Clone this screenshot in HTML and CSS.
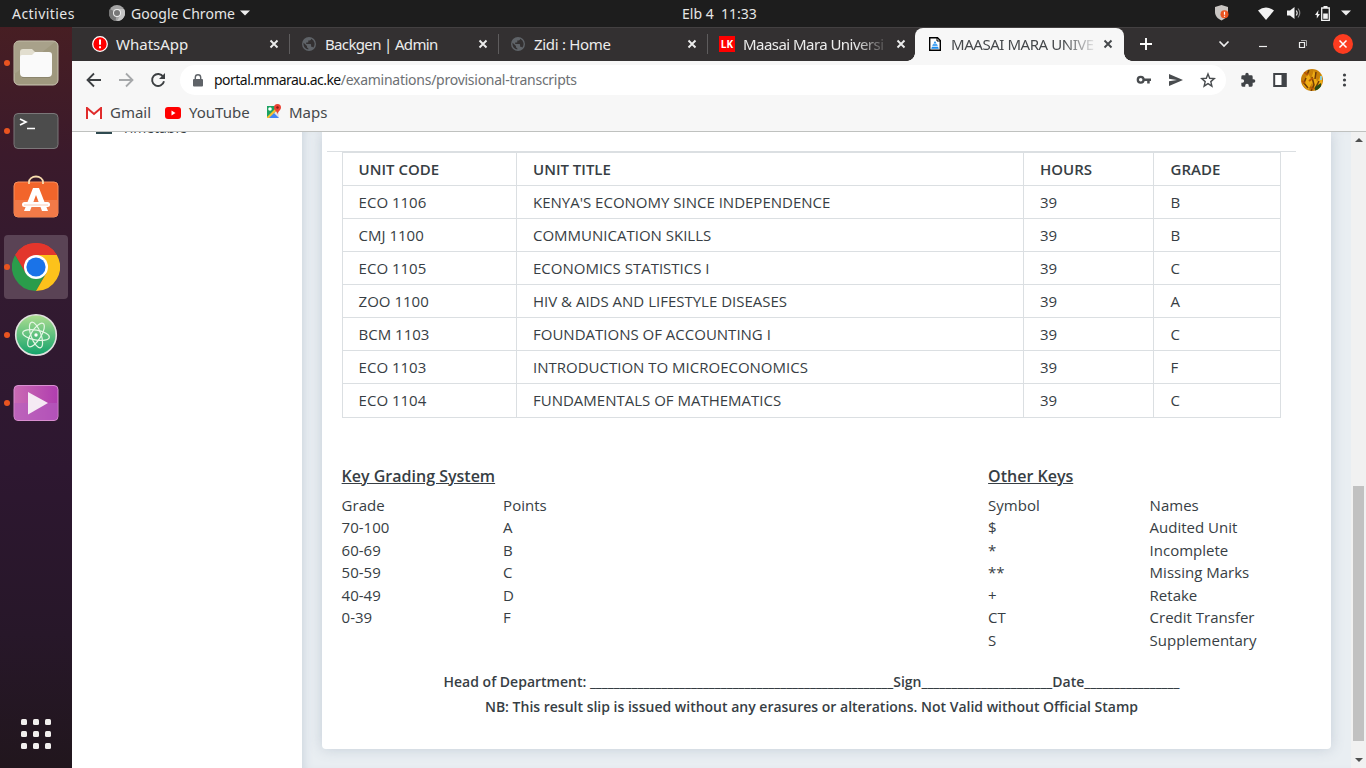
FILE: index.html
```html
<!DOCTYPE html>
<html lang="en">
<head>
<meta charset="utf-8">
<title>Provisional Transcripts</title>
<link rel="stylesheet" href="styles.css">
</head>
<body>
<svg class="defs" aria-hidden="true">
  <symbol id="x" viewBox="0 0 10 10"><path d="M1.500 1.500l7 7M8.500 1.500l-7 7" fill="none" stroke="currentColor" stroke-width="1.900"/></symbol>
  <symbol id="globe" viewBox="0 0 24 24"><path fill="#5f6368" d="M12 0a12 12 0 1 0 0 24 12 12 0 0 0 0-24zm-1.200 21.400A9.500 9.500 0 0 1 2.800 9.800l5.700 5.800v1.200c0 1.300 1 2.400 2.300 2.400zm8.300-3.100a2.400 2.400 0 0 0-2.300-1.600h-1.200v-3.600c0-.7-.5-1.200-1.200-1.200H7.200V9.600h2.400c.7 0 1.200-.5 1.200-1.200V6h2.400a2.400 2.400 0 0 0 2.400-2.400v-.5a9.500 9.500 0 0 1 3.500 15.200z"/></symbol>
</svg>
<div class="desktop">
  <header class="topbar">
    <span class="activities">Activities</span>
    <svg class="app-icon" viewBox="0 0 16 16"><circle cx="8" cy="8" r="8" fill="#a5a5a5"/><path d="M8 8L1 4a8 8 0 0 0 5.500 12z" fill="#777"/><path d="M8 4h7a8 8 0 0 1-7 12l3.500-6z" fill="#c4c4c4"/><circle cx="8" cy="8" r="4" fill="#eee"/><circle cx="8" cy="8" r="3" fill="#777"/></svg>
    <span class="app-name">Google Chrome</span>
    <svg class="caret" viewBox="0 0 10 6"><path d="M0 .5h10L5 5.500z" fill="#eee"/></svg>
    <span class="clock">Elb 4&nbsp; 11:33</span>
    <div class="tray">
      <svg class="shield" viewBox="0 0 14 16"><path d="M6.500 0L13 2v5c0 4-3 7-6.500 8.500C3 14 0 11 0 7V2z" fill="#c9c5c2"/><circle cx="9.500" cy="9.300" r="4" fill="#e95420"/><path d="M9.500 6.800v3M9.500 10.700v1" stroke="#fff" stroke-width="1.200"/></svg>
      <svg class="wifi" viewBox="0 0 16 13"><path d="M0 3.500Q8-2.500 16 3.500L8 13z" fill="#f2f2f2"/></svg>
      <svg class="sound" viewBox="0 0 15 14"><path d="M0 4.500h3L7.500 1v12L3 9.500H0z" fill="#f2f2f2"/><path d="M9.200 4.500q2 2.500 0 5" fill="none" stroke="#ddd" stroke-width="1.200"/><path d="M11 2.500q3.500 4.500 0 9" fill="none" stroke="#888" stroke-width="1.200"/></svg>
      <svg class="battery" viewBox="0 0 15 15"><path d="M3.500 4L0 9h1.800v3.500L5 8H3z" fill="#f2f2f2"/><path d="M6.700 2h7.600v12.300H6.700zM8.500 .6h4" fill="none" stroke="#f2f2f2" stroke-width="1.300"/><path d="M8.200 7.500h4.600v5.300H8.200z" fill="#f2f2f2"/></svg>
      <svg class="caret" viewBox="0 0 10 6"><path d="M0 .5h10L5 5.500z" fill="#eee"/></svg>
    </div>
  </header>

  <div class="workspace">
    <nav class="dock">
      <div class="launcher running"><svg viewBox="0 0 48 48"><rect x="2" y="2" width="44" height="44" rx="5" fill="#9f987e" stroke="#cbc6b3" stroke-width="1"/><path d="M2.500 35L43 3H7Q2.500 3 2.500 7z" fill="#a8a18a"/><path d="M8 13q0-3 3-3h9l3 3v7H8z" fill="#e2decf"/><path d="M8 18q0-2 2-2h10l3-3h14q3 0 3 3v18q0 4-4 4H12q-4 0-4-4z" fill="#fafafa"/><path d="M10 38.500h28" stroke="#8b856d"/></svg></div>
      <div class="launcher running"><svg viewBox="0 0 48 48"><rect x="2" y="6.500" width="44" height="35" rx="4" fill="#4c4c4c" stroke="#7b7779"/><path d="M8 12l6 3-6 3M15 21.500h8" fill="none" stroke="#fff" stroke-width="1.700"/></svg></div>
      <div class="launcher"><svg viewBox="0 0 48 48"><rect x="2" y="7" width="44" height="35" rx="4" fill="#f2652b" stroke="#f8905f"/><path d="M2.500 25h43v13q0 3.500-3.500 3.500H6q-3.500 0-3.500-3.500z" fill="#f27a48"/><path d="M17 9V7a7 5.500 0 0 1 14 0v2" fill="none" stroke="#f8dcae" stroke-width="1.800"/><path d="M21 13h6l9 23h-6l-6-16-6 16h-6z" fill="#fff"/><rect x="10" y="27" width="28" height="5" rx="2.500" fill="#fff"/><path d="M12 30h24" stroke="#f8c9b4"/></svg></div>
      <div class="launcher running focused"><svg viewBox="0 0 48 48"><path d="M24 24L3.200 12A24 24 0 0 1 44.800 12z" fill="#e3362c"/><path d="M24 24l-9 8L3.200 12a24 24 0 0 0 20.800 36l10-18z" fill="#2a9c4b"/><path d="M24 12h20.800A24 24 0 0 1 24 48l10.400-18z" fill="#fcc21b"/><path d="M3.200 12A24 24 0 0 1 44.800 12H24l-10.400 18z" fill="#e3362c"/><circle cx="24" cy="24" r="12" fill="#fff"/><circle cx="24" cy="24" r="9.600" fill="#1a73e8"/></svg></div>
      <div class="launcher running"><svg viewBox="0 0 48 48"><defs><linearGradient id="atom" x2="0" y2="1"><stop stop-color="#aede91"/><stop offset="1" stop-color="#12a36b"/></linearGradient></defs><circle cx="24" cy="24" r="20.300" fill="url(#atom)" stroke="#e1e1df" stroke-width="1.600"/><g fill="none" stroke="#e4f6e4" stroke-width="1.200"><ellipse cx="24" cy="24" rx="13.500" ry="5" transform="rotate(10 24 24)"/><ellipse cx="24" cy="24" rx="13.500" ry="5" transform="rotate(70 24 24)"/><ellipse cx="24" cy="24" rx="13.500" ry="5" transform="rotate(122 24 24)"/></g><circle cx="24" cy="24" r="1.700" fill="#fff"/></svg></div>
      <div class="launcher running"><svg viewBox="0 0 48 48"><defs><linearGradient id="video" x2="1" y2="0"><stop stop-color="#ca6bb3"/><stop offset="1" stop-color="#b03daf"/></linearGradient></defs><rect x="2" y="6.500" width="44" height="35" rx="4" fill="url(#video)" stroke="#d88fd0"/><path d="M2.500 24h43v14q0 3-3 3h-37q-3 0-3-3z" fill="#b45fc0" opacity=".6"/><path d="M16 13l20 11-20 11.500z" fill="#f5eaf4"/></svg></div>
      <div class="app-grid"><i></i><i></i><i></i><i></i><i></i><i></i><i></i><i></i><i></i></div>
    </nav>

    <main class="browser">
      <div class="tabs">
        <div class="tab"><svg class="favicon" viewBox="0 0 16 16"><circle cx="8" cy="8" r="7.300" fill="#f00" stroke="#fff" stroke-width="1.300"/><path d="M8 3.500v5.200M8 10.300v2" stroke="#fff" stroke-width="2"/></svg><span class="tab-title t-wa">WhatsApp</span><svg class="close"><use href="#x"/></svg></div>
        <div class="tab sep"><svg class="favicon globe"><use href="#globe"/></svg><span class="tab-title t-bg">Backgen | Admin</span><svg class="close"><use href="#x"/></svg></div>
        <div class="tab sep"><svg class="favicon globe"><use href="#globe"/></svg><span class="tab-title t-zi">Zidi : Home</span><svg class="close"><use href="#x"/></svg></div>
        <div class="tab sep"><span class="favicon lk">LK</span><span class="tab-title fade t-mm">Maasai Mara Universi</span><svg class="close"><use href="#x"/></svg></div>
        <div class="tab active"><svg class="favicon" viewBox="0 0 16 16"><path d="M2.700 1.700h7.800l2.800 2.800v9.800H2.700z" fill="#fff" stroke="#000" stroke-width="1.400"/><path d="M10 1.500v3.500h3.500" fill="none" stroke="#000"/><path d="M8 5l1.500 2.500h-3zM6 8.300h4l.8 1.500H5.200zM5 10.700h6l.8 2H4.200z" fill="#1a8cf0"/></svg><span class="tab-title fade t-act">MAASAI MARA UNIVE</span><svg class="close"><use href="#x"/></svg></div>
        <svg class="newtab" viewBox="0 0 12 12"><path d="M6 0v12M0 6h12" stroke="#fff" stroke-width="1.900"/></svg>
        <div class="winctl">
          <svg viewBox="0 0 20 20"><path d="M6.500 7.500L11 12l4.500-4.500" fill="none" stroke="#eee" stroke-width="1.700"/></svg>
          <svg viewBox="0 0 20 20"><path d="M6 12.500h8" stroke="#eee" stroke-width="1.200"/></svg>
          <svg viewBox="0 0 20 20"><path d="M6.500 8.500h5v5h-5z" fill="none" stroke="#eee" stroke-width="1.200"/><path d="M8 6.500h5.500V12" fill="none" stroke="#aaa"/></svg>
          <svg viewBox="0 0 20 20"><circle cx="10" cy="10" r="10" fill="#fc3c20"/><path d="M6.500 6.500l7 7m0-7l-7 7" stroke="#fff" stroke-width="1.500"/></svg>
        </div>
      </div>

      <div class="toolbar">
        <svg class="ico" viewBox="0 0 16 16"><path d="M15 8H2M8 1.500L1.500 8 8 14.500" fill="none" stroke="#3c3f42" stroke-width="1.800"/></svg>
        <svg class="ico" viewBox="0 0 16 16"><path d="M1 8h13M8 1.500L14.500 8 8 14.500" fill="none" stroke="#a6a8aa" stroke-width="1.800"/></svg>
        <svg class="ico" viewBox="0 0 16 16"><path d="M13.200 4.800A6 6 0 1 0 14 9.300" fill="none" stroke="#3c3f42" stroke-width="1.900"/><path d="M15 1v6H9z" fill="#3c3f42"/></svg>
        <div class="omnibox">
          <svg class="lock" viewBox="0 0 10 13"><path d="M1 5h8q1 0 1 1v5.500q0 1-1 1H1q-1 0-1-1V6q0-1 1-1z" fill="#5f6368"/><path d="M2.300 5.500V3.500a2.700 2.700 0 0 1 5.400 0v2" fill="none" stroke="#5f6368" stroke-width="1.400"/></svg>
          <span class="url"><b>portal.mmarau.ac.ke</b><span>/examinations/provisional-transcripts</span></span>
          <svg class="ico" viewBox="0 0 16 16"><circle cx="4.700" cy="7.700" r="2.900" fill="none" stroke="#494c4f" stroke-width="2.300"/><path d="M8 6.600h7v2.400h-1.300v2.400h-2.500V9H8z" fill="#494c4f"/></svg>
          <svg class="ico" viewBox="0 0 16 16"><path d="M1 2l14 6-14 6V9.200L9 8 1 6.800z" fill="#494c4f"/></svg>
          <svg class="ico" viewBox="0 0 16 16"><path d="M8 2l1.700 4.300 4.600.3-3.500 3 1.100 4.500L8 11.600l-3.900 2.500 1.100-4.500-3.500-3 4.600-.3z" fill="none" stroke="#494c4f" stroke-width="1.400"/></svg>
        </div>
        <svg class="ico ext" viewBox="0 0 24 24"><path d="M20.500 11H19V7a2 2 0 0 0-2-2h-4V3.500a2.500 2.500 0 0 0-5 0V5H4a2 2 0 0 0-2 2v3.800h1.500a2.700 2.700 0 0 1 0 5.400H2V20a2 2 0 0 0 2 2h3.800v-1.500a2.700 2.700 0 0 1 5.400 0V22H17a2 2 0 0 0 2-2v-4h1.500a2.500 2.500 0 0 0 0-5z" fill="#404347"/></svg>
        <svg class="ico" viewBox="0 0 16 16"><path d="M2.200 2h11.600v12H2.200z" fill="#fff" stroke="#404347" stroke-width="2"/><path d="M9.500 2H14v12H9.500z" fill="#404347"/></svg>
        <svg class="avatar" viewBox="0 0 22 22"><defs><clipPath id="round"><circle cx="11" cy="11" r="11"/></clipPath></defs><g clip-path="url(#round)"><path fill="#c98108" d="M0 0h22v22H0z"/><path d="M2 16L7 4l3 6 3-9 3 12 5-8v9l-5 8-5-8-4 7z" fill="#efac14"/><path d="M11 8l2 8-3 6M5 9l-2 5 4 5M15 3l-1 7M8 1L6 6M18 12l-4 8" stroke="#713c06" stroke-width="1.500" fill="none"/><path d="M14 18l6-4v6l-6 2z" fill="#294c16"/><path d="M3 3l4 3M8 12l4-3M1 12l3 2M12 20l-3-2" stroke="#ba5805" stroke-width="2"/><path d="M19 7h2v4h-2z" fill="#8fcbd0"/></g></svg>
        <svg class="ico" viewBox="0 0 16 16"><g fill="#404347"><circle cx="8.500" cy="3" r="1.600"/><circle cx="8.500" cy="8" r="1.600"/><circle cx="8.500" cy="13" r="1.600"/></g></svg>
      </div>

      <div class="bookmarks">
        <svg class="gmail" viewBox="0 0 16 12"><path d="M1 12V1l7 6 7-6v11" fill="#fff" stroke="#e02c2c" stroke-width="2"/></svg><span class="b-gm">Gmail</span>
        <svg class="yt" viewBox="0 0 16 12"><rect width="16" height="12" rx="3" fill="#f00"/><path d="M6.500 3.500v5l4-2.500z" fill="#fff"/></svg><span class="b-yt">YouTube</span>
        <svg class="maps" viewBox="0 0 16 16"><path d="M1 2h12v12H1z" fill="#1ca261"/><path d="M13 4v10H3z" fill="#e5e5e5"/><path d="M8 9l5 5H2z" fill="#4285f4"/><path d="M1 13L12 2h1v2L3 14H1z" fill="#fbc02d"/><circle cx="4" cy="5" r="1.800" fill="#fff"/><path d="M11.500 0a3.500 3.500 0 0 1 3.500 3.500c0 2.500-3 3.500-3.500 7-.5-3.500-3.500-4.500-3.500-7A3.500 3.500 0 0 1 11.500 0z" fill="#ea4335"/><circle cx="11.500" cy="3.500" r="1.200" fill="#8a1c15"/></svg><span class="b-mp">Maps</span>
      </div>

      <div class="page">
        <aside class="sidebar"><div class="side-item"><i></i><span>Timetable</span></div></aside>
        <section class="content">
          <article class="card">
            <hr>
            <div class="row">
              <table>
                <thead><tr><th class="c1">UNIT CODE</th><th class="c2">UNIT TITLE</th><th class="c3">HOURS</th><th class="c4">GRADE</th></tr></thead>
                <tbody>
                  <tr><td>ECO 1106</td><td>KENYA'S ECONOMY SINCE INDEPENDENCE</td><td>39</td><td>B</td></tr>
                  <tr><td>CMJ 1100</td><td>COMMUNICATION SKILLS</td><td>39</td><td>B</td></tr>
                  <tr><td>ECO 1105</td><td>ECONOMICS STATISTICS I</td><td>39</td><td>C</td></tr>
                  <tr><td>ZOO 1100</td><td>HIV &amp; AIDS AND LIFESTYLE DISEASES</td><td>39</td><td>A</td></tr>
                  <tr><td>BCM 1103</td><td>FOUNDATIONS OF ACCOUNTING I</td><td>39</td><td>C</td></tr>
                  <tr><td>ECO 1103</td><td>INTRODUCTION TO MICROECONOMICS</td><td>39</td><td>F</td></tr>
                  <tr><td>ECO 1104</td><td>FUNDAMENTALS OF MATHEMATICS</td><td>39</td><td>C</td></tr>
                </tbody>
              </table>
              <div class="keys">
                <div class="grading">
                  <h2>Key Grading System</h2>
                  <dl><dt>Grade</dt><dd>Points</dd><dt>70-100</dt><dd>A</dd><dt>60-69</dt><dd>B</dd><dt>50-59</dt><dd>C</dd><dt>40-49</dt><dd>D</dd><dt>0-39</dt><dd>F</dd></dl>
                </div>
                <div class="other">
                  <h2>Other Keys</h2>
                  <dl><dt>Symbol</dt><dd>Names</dd><dt>$</dt><dd>Audited Unit</dd><dt>*</dt><dd>Incomplete</dd><dt>**</dt><dd>Missing Marks</dd><dt>+</dt><dd>Retake</dd><dt>CT</dt><dd>Credit Transfer</dd><dt>S</dt><dd>Supplementary</dd></dl>
                </div>
              </div>
              <div class="signoff">
                <p>Head of Department: ___________________________________________________Sign______________________Date________________</p>
                <p>NB: This result slip is issued without any erasures or alterations. Not Valid without Official Stamp</p>
              </div>
            </div>
          </article>
        </section>
        <div class="scrollbar">
          <svg viewBox="0 0 8 4"><path d="M0 4h8L4 0z" fill="#505050"/></svg>
          <div class="thumb"></div>
          <svg viewBox="0 0 8 4"><path d="M0 0h8L4 4z" fill="#505050"/></svg>
        </div>
      </div>
    </main>
  </div>
</div>
</body>
</html>
```
FILE: styles.css
```css
* { box-sizing: border-box; }
body { margin: 0; overflow: hidden; font-family: "Noto Sans", "Open Sans", sans-serif; }
svg { display: block; flex: none; }
.defs { position: absolute; width: 0; height: 0; }
.desktop { width: 1366px; height: 768px; display: flex; flex-direction: column; overflow: hidden; }

/* System bar */
.topbar { height: 27px; flex: none; background: #1d1d1d; color: #e6e6e6; display: flex; align-items: center; padding: 0 15px 1px 12px; font-size: 14px; white-space: pre; }
.activities { width: 97px; letter-spacing: .45px; }
.app-icon { width: 16px; height: 16px; margin-right: 6px; }
.app-name { width: 109px; letter-spacing: .05px; }
.caret { width: 10px; height: 6px; }
.clock { margin-left: 432px; letter-spacing: 0; }
.tray { margin-left: auto; display: flex; align-items: center; }
.shield { width: 14px; height: 16px; margin-right: 29px; }
.wifi { width: 16px; height: 13px; margin-right: 13px; }
.sound { width: 15px; height: 14px; margin-right: 13px; }
.battery { width: 15px; height: 15px; margin-right: 11px; }

/* Dock */
.workspace { flex: 1; display: flex; min-height: 0; }
.dock { width: 72px; flex: none; display: flex; flex-direction: column; padding: 4px 4px 19px; gap: 4px; background: linear-gradient(#471e23, #3b1a2b 17%, #321a30 35%, #2d1730 60%, #271729 82%, #21161d); }
.launcher { height: 64px; flex: none; border-radius: 4px; display: flex; align-items: center; justify-content: center; position: relative; }
.launcher svg { width: 48px; height: 48px; }
.launcher.focused { background: #5a4355; }
.running::before { content: ""; position: absolute; left: 0; top: 29px; width: 6px; height: 6px; border-radius: 50%; background: #e95420; }
.app-grid { margin: auto auto 0; display: grid; grid-template-columns: repeat(3, 6px); gap: 6px; }
.app-grid i { height: 6px; border-radius: 1.500px; background: #f2efee; }

/* Tabs */
.browser { flex: 1; min-width: 0; display: flex; flex-direction: column; background: #f7f7f7; }
.tabs { height: 34px; flex: none; display: flex; align-items: center; background: #333031; border-top: 1px solid #434041; padding: 0 13px 0 8px; }
.tab { width: 209px; height: 33px; flex: none; display: flex; align-items: center; padding: 0 10px 1px 12px; position: relative; color: #ececec; font-size: 15px; }
.sep::before { content: ""; position: absolute; left: 0; top: 6px; width: 1px; height: 20px; background: #5e5c5d; }
.favicon { width: 16px; height: 16px; flex: none; margin-right: 8px; }
.favicon.globe { padding: 1px; }
.lk { background: #f00; color: #fff; font: bold 10px/16px "Open Sans", sans-serif; text-align: center; }
.tab-title { width: 144px; flex: none; margin-top: -1px; white-space: nowrap; }
.t-bg { letter-spacing: -.65px; }
.t-zi { letter-spacing: -.3px; }
.t-mm { letter-spacing: -.55px; }
.t-act { letter-spacing: -.45px; }
.fade { -webkit-mask-image: linear-gradient(90deg, #000 112px, transparent 147px); mask-image: linear-gradient(90deg, #000 112px, transparent 147px); }
.close { width: 10px; height: 10px; margin-left: 9px; }
.active { background: #f7f7f7; color: #45484b; margin-left: -1px; border-radius: 8px 8px 0 0; padding-left: 12px; }
.active .close { margin-left: 8px; }
.active::before, .active::after { content: ""; position: absolute; bottom: 0; width: 8px; height: 8px; }
.active::before { left: -8px; background: radial-gradient(circle at 0 0, #333031 7.500px, #f7f7f7 8px); }
.active::after { right: -8px; background: radial-gradient(circle at 100% 0, #333031 7.500px, #f7f7f7 8px); }
.newtab { width: 12px; height: 12px; margin: -1px 0 0 16px; }
.winctl { margin: -1px 0 0 auto; display: flex; gap: 20px; }
.winctl svg { width: 20px; height: 20px; }

/* Toolbar */
.toolbar { height: 38px; flex: none; display: flex; align-items: center; gap: 16px; padding: 0 14px; }
.ico { width: 16px; height: 16px; }
.omnibox { height: 30px; flex: 1; margin: 0 -2px 0 -2px; border-radius: 15px; background: #fff; display: flex; align-items: center; gap: 16px; padding: 0 10px 0 13px; }
.lock { width: 10px; height: 13px; margin-right: -5px; }
.url { flex: 1; margin-top: -1px; font-size: 14px; color: #6d7073; white-space: nowrap; }
.url b { font-weight: 400; color: #111; letter-spacing: -.52px; }
.url span { letter-spacing: -.26px; }
.avatar { width: 22px; height: 22px; margin: 0 -3px; }
.bookmarks { height: 33px; flex: none; display: flex; align-items: center; padding: 0 14px 5px; color: #45484b; font-size: 15px; border-bottom: 1px solid #bfc1bf; }
.bookmarks span { margin-top: -2px; }
.gmail { width: 16px; height: 12px; margin-right: 8px; }
.yt { width: 16px; height: 12px; margin-right: 8px; }
.maps { width: 16px; height: 16px; margin: -1px 7px 0 0; }
.b-gm { width: 55px; }
.b-yt { width: 77px; }

/* Portal page */
.page { flex: 1; min-height: 0; display: flex; font-family: "Open Sans", sans-serif; font-size: 15px; line-height: 22.500px; color: #373e44; }
.sidebar { width: 230px; flex: none; background: #fff; overflow: hidden; }
.side-item { display: flex; margin-top: -15px; padding-left: 24px; gap: 10px; font-size: 14px; line-height: 21px; }
.side-item i { width: 16px; height: 17px; background: #2f4a50; }
.content { flex: 1; min-width: 0; padding: 0 20px 19px; background: #e9eef2; box-shadow: inset 8px 0 10px -6px #ccd5de; overflow: hidden; }
.card { height: 617px; background: #fff; border-radius: 0 0 4px 4px; box-shadow: 0 0 14px rgba(80, 100, 130, .24); padding: 19px 35px 0 5px; }
hr { margin: 0; border: 0; height: 1px; background: #dbdfe2; }
.row { padding: 0 15px; }
table { width: 939px; table-layout: fixed; border-collapse: collapse; }
th, td { height: 33px; border: 1px solid #dbdfe2; padding: 0 16px; text-align: left; line-height: 22px; }
tr:last-child td { padding-bottom: 1px; height: 34px; }
th { font-weight: 600; }
th:first-child, td:first-child { padding-left: 15.600px; }
.c1 { width: 174px; }
.c2 { width: 507px; }
.c3 { width: 130px; }
.c4 { width: 127px; }
.c4, td:last-child { padding-left: 16.600px; }
.keys { display: flex; margin: 47px 0 0 -.4px; height: 191px; }
.grading { width: 646.500px; flex: none; }
.other { flex: none; width: 292px; }
.keys h2 { margin: 0 0 5.700px; font-size: 16px; line-height: 23px; font-weight: 600; text-decoration: underline; }
dl { margin: 0; display: grid; grid-template-columns: 161.500px 130px; }
dt, dd { margin: 0; }
.signoff { margin-top: 13px; text-align: center; font-weight: 600; font-size: 14px; line-height: 25px; white-space: nowrap; }
.signoff p { margin: 0; }

.scrollbar { width: 15px; flex: none; background: #f1f1f1; display: flex; flex-direction: column; align-items: center; padding: 6px 0 6px 0; }
.scrollbar svg { width: 8px; height: 4px; }
.thumb { width: 11px; height: 255px; margin: auto 0 17px; background: #c1c1c1; }
```
